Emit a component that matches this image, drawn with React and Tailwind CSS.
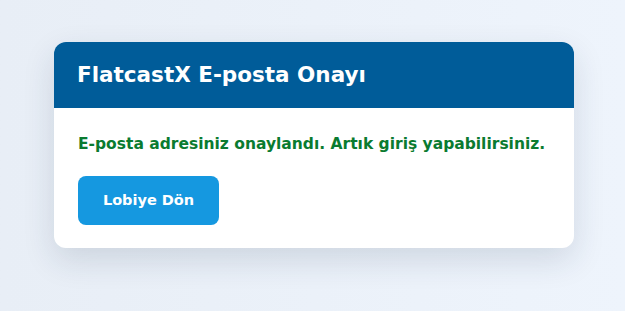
import React from 'react';

export default function App() {
  return (
    <div className="min-h-[311px] w-full bg-gradient-to-r from-[#e8eef6] to-[#eef4fc] pt-[42px] pl-[3px] flex justify-center items-start font-['DejaVu_Sans',sans-serif]">
      {/* Card */}
      <div className="w-[520px] bg-white rounded-xl overflow-hidden shadow-[0_12px_32px_rgba(30,50,80,0.14)]">
        <div className="h-[66px] bg-[#005c99] px-[23px] flex items-center">
          <h1 className="text-[21.5px] font-bold text-white">FlatcastX E-posta Onayı</h1>
        </div>
        <div className="px-6 pt-6 pb-[23px]">
          <p className="text-[15.5px] leading-6 font-bold text-[#0a7b30] whitespace-nowrap">
            E-posta adresiniz onaylandı. Artık giriş yapabilirsiniz.
          </p>
          <button className="mt-5 h-[49px] w-[141px] rounded-lg bg-[#1598e0] text-white text-[14.5px] font-bold">
            Lobiye Dön
          </button>
        </div>
      </div>
    </div>
  );
}
